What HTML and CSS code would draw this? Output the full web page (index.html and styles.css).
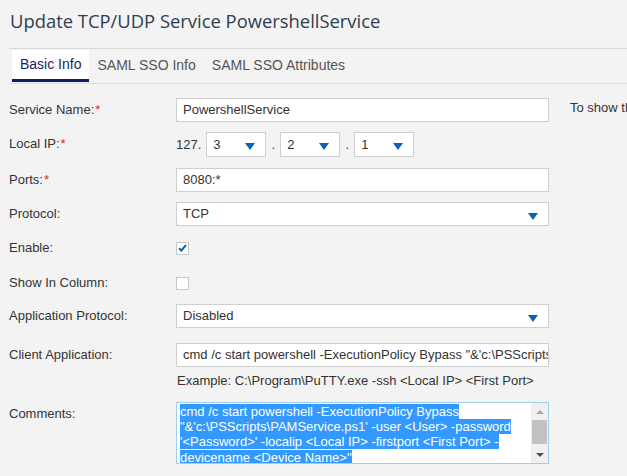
FILE: index.html
```html
<!DOCTYPE html>
<html>
<head>
<meta charset="utf-8">
<link rel="stylesheet" href="styles.css">
</head>
<body>
<div class="page">
  <h1 class="title">Update TCP/UDP Service PowershellService</h1>
  <div class="tabs">
    <div class="tab active">Basic Info</div>
    <div class="tab">SAML SSO Info</div>
    <div class="tab">SAML SSO Attributes</div>
  </div>
  <div class="content">
    <div class="form">
      <div class="row r1">
        <div class="label">Service Name:<span class="req">*</span></div>
        <div class="ctrl"><div class="input">PowershellService</div></div>
      </div>
      <div class="row r2">
        <div class="label">Local IP:<span class="req">*</span></div>
        <div class="ctrl ip">
          <span class="ippre">127.</span>
          <div class="sel small"><span>3</span><span class="arrow"></span></div>
          <span class="dot">.</span>
          <div class="sel small"><span>2</span><span class="arrow"></span></div>
          <span class="dot">.</span>
          <div class="sel small"><span>1</span><span class="arrow"></span></div>
        </div>
      </div>
      <div class="row r3">
        <div class="label">Ports:<span class="req">*</span></div>
        <div class="ctrl"><div class="input">8080:*</div></div>
      </div>
      <div class="row r4">
        <div class="label">Protocol:</div>
        <div class="ctrl"><div class="sel"><span>TCP</span><span class="arrow"></span></div></div>
      </div>
      <div class="row r5">
        <div class="label">Enable:</div>
        <div class="ctrl chk-wrap"><div class="chk">
          <svg width="9" height="8" viewBox="0 0 9 8"><path d="M1 4.2 L3.4 6.5 L8 1.2" fill="none" stroke="#0b5fb0" stroke-width="2"/></svg>
        </div></div>
      </div>
      <div class="row r6">
        <div class="label">Show In Column:</div>
        <div class="ctrl chk-wrap"><div class="chk"></div></div>
      </div>
      <div class="row r7">
        <div class="label">Application Protocol:</div>
        <div class="ctrl"><div class="sel"><span>Disabled</span><span class="arrow"></span></div></div>
      </div>
      <div class="row r8">
        <div class="label">Client Application:</div>
        <div class="ctrl">
          <div class="input clip">cmd /c start powershell -ExecutionPolicy Bypass "&amp;'c:\PSScripts\PAMService.ps1' -user &lt;User&gt; -password '&lt;Password&gt;'</div>
          <div class="hint">Example: C:\Program\PuTTY.exe -ssh &lt;Local IP&gt; &lt;First Port&gt;</div>
        </div>
      </div>
      <div class="row r9">
        <div class="label">Comments:</div>
        <div class="ctrl">
          <div class="textarea">
            <div class="ta-text"><span class="selx">cmd /c start powershell -ExecutionPolicy Bypass </span><br><span class="selx">"&amp;'c:\PSScripts\PAMService.ps1' -user &lt;User&gt; -password </span><br><span class="selx">'&lt;Password&gt;' -localip &lt;Local IP&gt; -firstport &lt;First Port&gt; -</span><br><span class="selx">devicename &lt;Device Name&gt;"</span></div>
            <div class="sb">
              <div class="sb-up"></div>
              <div class="sb-track"><div class="sb-thumb"></div></div>
              <div class="sb-down"></div>
            </div>
          </div>
        </div>
      </div>
    </div>
    <div class="side">To show th</div>
  </div>
</div>
</body>
</html>
```

FILE: styles.css
```css
html, body {
  margin: 0;
  padding: 0;
  background: #f3f3f3;
  overflow: hidden;
}
body {
  width: 627px;
  height: 476px;
  font-family: "Liberation Sans", Arial, sans-serif;
  font-size: 13px;
  color: #333;
}
.page {
  padding: 0 0 0 9px;
}
.title {
  margin: 0;
  padding: 8px 0 0 1px;
  height: 41px;
  box-sizing: border-box;
  font-family: "Open Sans", sans-serif;
  font-weight: 400;
  font-size: 18.4px;
  color: #2d3e50;
}
.tabs {
  border-top: 1px solid #d8d8d8;
  border-bottom: 1px solid #dcdcdc;
  display: flex;
  height: 36px;
  margin-top: 7px;
  padding: 1px 0 0 3px;
  box-sizing: border-box;
}
.tab {
  padding: 0 8px;
  height: 30px;
  line-height: 30px;
  color: #555;
  font-size: 14px;
}
.tab.active {
  background: #fff;
  color: #1b1f5e;
  border-bottom: 3px solid #0e1a6b;
  height: 29px;
  line-height: 29px;
}
.content {
  display: flex;
  padding-top: 14px;
}
.form {
  width: 540px;
}
.row {
  display: grid;
  grid-template-columns: 167px 373px;
  align-items: start;
}
.label {
  padding-top: 4px;
  line-height: 16px;
  color: #333;
  white-space: nowrap;
}
.req {
  color: #e0262b;
  margin-left: 1px;
}
.input, .sel {
  height: 24px;
  box-sizing: border-box;
  background: #fff;
  border: 1px solid #cfcfcf;
  padding: 0 6px;
  line-height: 22px;
  color: #333;
  white-space: nowrap;
  overflow: hidden;
}
.sel {
  display: flex;
  justify-content: space-between;
  align-items: center;
  padding-right: 10px;
}
.arrow {
  width: 0;
  height: 0;
  border-left: 5px solid transparent;
  border-right: 5px solid transparent;
  border-top: 7px solid #0b63b3;
  margin-top: 4px;
}
.ip {
  display: flex;
  align-items: center;
  height: 25px;
}
.ippre {
  margin-right: 5px;
}
.sel.small {
  width: 60px;
  height: 25px;
  padding-left: 6px;
}
.dot {
  width: 14px;
  text-align: center;
}
.r2 { margin-top: 10px; }
.r3 { margin-top: 11px; }
.r4 { margin-top: 10px; }
.r5 { margin-top: 10px; }
.r6 { margin-top: 11px; }
.r7 { margin-top: 9px; }
.r8 { margin-top: 15px; }
.r9 { margin-top: 13px; }
.chk-wrap {
  height: 24px;
  display: flex;
  align-items: center;
}
.chk {
  width: 13px;
  height: 13px;
  box-sizing: border-box;
  border: 1px solid #c8c8c8;
  background: #fff;
  display: flex;
  align-items: center;
  justify-content: center;
}
.hint {
  margin-top: 6px;
  line-height: 16px;
  padding-left: 1px;
  color: #333;
  white-space: nowrap;
}
.textarea {
  height: 62px;
  box-sizing: border-box;
  border: 1px solid #a1cfeb;
  background: #fff;
  display: flex;
  overflow: hidden;
}
.ta-text {
  flex: 1;
  padding: 1px 0 0 3px;
  line-height: 15.2px;
  font-size: 13px;
  white-space: nowrap;
  overflow: hidden;
}
.selx {
  background: #3399ff;
  color: #fff;
}
.sb {
  width: 17px;
  background: #f0f0f0;
  display: flex;
  flex-direction: column;
  align-items: center;
}
.sb-up, .sb-down {
  height: 17px;
  width: 17px;
  display: flex;
  align-items: center;
  justify-content: center;
}
.sb-up::after {
  content: "";
  border-left: 4px solid transparent;
  border-right: 4px solid transparent;
  border-bottom: 4px solid #a3a3a3;
}
.sb-down::after {
  content: "";
  border-left: 4px solid transparent;
  border-right: 4px solid transparent;
  border-top: 4px solid #505050;
}
.sb-track {
  flex: 1;
  width: 100%;
  display: flex;
  justify-content: center;
}
.sb-thumb {
  width: 15px;
  height: 24px;
  background: #c1c1c1;
}
.side {
  margin-left: 21px;
  padding-top: 2px;
  white-space: nowrap;
  color: #333;
}
```
